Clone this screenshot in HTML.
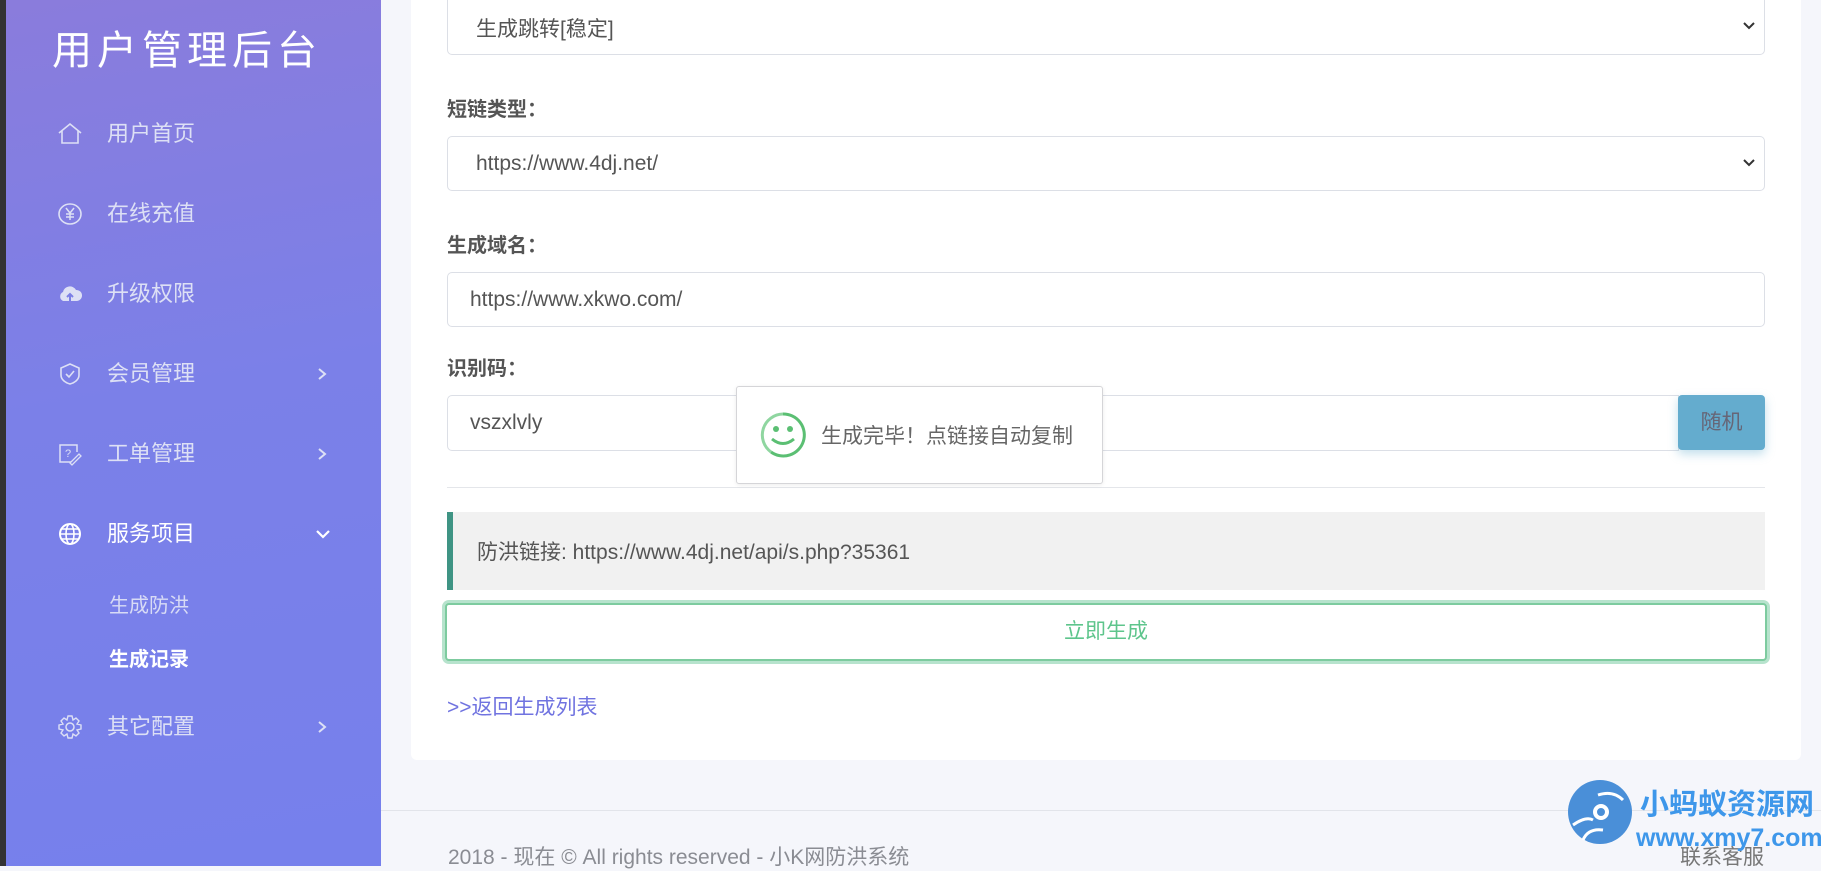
<!DOCTYPE html>
<html><head><meta charset="utf-8"><style>
*{box-sizing:border-box;margin:0;padding:0}
body{width:1821px;height:866px;overflow:hidden;background:#f5f6fb;font-family:"Liberation Sans","Noto Sans CJK SC",sans-serif;position:relative;color:#555}
.dark{position:absolute;left:0;top:0;width:6px;height:866px;background:#333}
.side{position:absolute;left:6px;top:0;width:375px;height:866px;background:linear-gradient(170deg,#8a7cdc 0%,#7b80e8 45%,#7680ec 100%)}
.title{position:absolute;left:46px;top:18px;color:#fff;font-size:40px;letter-spacing:5px}
.mi{position:absolute;left:107px;color:#dde0f5;font-size:22px;line-height:30px}
.ic{position:absolute;left:57px;width:26px;height:26px}
.chev{position:absolute;left:316px}
.sub{position:absolute;left:109px;font-size:20px;color:#d8dbf5}
.card{position:absolute;left:411px;top:-10px;width:1390px;height:770px;background:#fff;border-radius:6px}
.box{position:absolute;left:447px;width:1318px;border:1px solid #dcdfe6;border-radius:5px;background:#fff;font-size:21px;color:#555}
.lbl{position:absolute;left:447px;font-size:20px;color:#555;font-weight:bold}
.arrow{position:absolute;right:8px;top:50%;margin-top:-8px}
</style></head><body>
<div class="dark"></div>
<div class="side">
<div class="title">用户管理后台</div>
</div>
<svg class="ic" style="top:121px" viewBox="0 0 26 26"><path d="M2 12 L13 3 L24 12 M5 10 V22 H21 V10" fill="none" stroke="#dde0f5" stroke-width="1.6"/></svg>
<div class="mi" style="top:119px">用户首页</div>
<svg class="ic" style="top:201px" viewBox="0 0 26 26"><ellipse cx="13" cy="13" rx="11" ry="10" fill="none" stroke="#dde0f5" stroke-width="1.6"/><path d="M9 7 L13 12 L17 7 M13 12 V19 M9 13 H17 M9 16 H17" fill="none" stroke="#dde0f5" stroke-width="1.5"/></svg>
<div class="mi" style="top:199px">在线充值</div>
<svg class="ic" style="top:281px" viewBox="0 0 26 26"><path d="M6 20 A5 5 0 0 1 6 11 A7 7 0 0 1 19 9 A5.5 5.5 0 0 1 20 20 Z" fill="#dde0f5"/><path d="M13 20 V13 M10 16 L13 13 L16 16" stroke="#7c7fe6" stroke-width="2" fill="none"/></svg>
<div class="mi" style="top:279px">升级权限</div>
<svg class="ic" style="top:361px" viewBox="0 0 26 26"><path d="M13 3 L22 7 V14 C22 19 17 22 13 23 C9 22 4 19 4 14 V7 Z" fill="none" stroke="#dde0f5" stroke-width="1.6"/><path d="M9 13 L12 16 L17 10" fill="none" stroke="#dde0f5" stroke-width="1.6"/></svg>
<div class="mi" style="top:359px">会员管理</div>
<svg class="chev" style="top:367px" width="12" height="14" viewBox="0 0 12 14"><path d="M3 2 L9 7 L3 12" fill="none" stroke="#dde0f5" stroke-width="2"/></svg>
<svg class="ic" style="top:441px" viewBox="0 0 26 26"><path d="M14 21 H3 V4 H20 V11" fill="none" stroke="#dde0f5" stroke-width="1.5"/><text x="8" y="16" font-size="11" fill="#dde0f5" font-family="Liberation Sans">?</text><path d="M13 22 L22 13 L24 15 L15 24 Z" fill="none" stroke="#dde0f5" stroke-width="1.3"/></svg>
<div class="mi" style="top:439px">工单管理</div>
<svg class="chev" style="top:447px" width="12" height="14" viewBox="0 0 12 14"><path d="M3 2 L9 7 L3 12" fill="none" stroke="#dde0f5" stroke-width="2"/></svg>
<svg class="ic" style="top:521px" viewBox="0 0 26 26"><circle cx="13" cy="13" r="10" fill="none" stroke="#fff" stroke-width="2"/><ellipse cx="13" cy="13" rx="4" ry="10" fill="none" stroke="#fff" stroke-width="1.6"/><path d="M3 13 H23 M5 8 H21 M5 18 H21" stroke="#fff" stroke-width="1.6"/></svg>
<div class="mi" style="top:519px;color:#fff">服务项目</div>
<svg style="position:absolute;left:315px;top:528px" width="16" height="12" viewBox="0 0 16 12"><path d="M2 3 L8 9 L14 3" fill="none" stroke="#fff" stroke-width="2.2"/></svg>
<div class="sub" style="top:589px">生成防洪</div>
<div class="sub" style="top:643px;color:#fff;font-weight:bold">生成记录</div>
<svg class="ic" style="top:714px" viewBox="0 0 26 26"><circle cx="13" cy="13" r="4" fill="none" stroke="#dde0f5" stroke-width="1.5"/><path d="M11 2 H15 L16 6 L19 4 L22 7 L20 10 L24 11 V15 L20 16 L22 19 L19 22 L16 20 L15 24 H11 L10 20 L7 22 L4 19 L6 16 L2 15 V11 L6 10 L4 7 L7 4 L10 6 Z" fill="none" stroke="#dde0f5" stroke-width="1.4"/></svg>
<div class="mi" style="top:712px">其它配置</div>
<svg class="chev" style="top:720px" width="12" height="14" viewBox="0 0 12 14"><path d="M3 2 L9 7 L3 12" fill="none" stroke="#dde0f5" stroke-width="2"/></svg>

<div class="card"></div>
<div class="box" style="top:0;height:55px;border-top:none;border-radius:0 0 5px 5px"><span style="position:absolute;left:28px;top:13px">生成跳转[稳定]</span><svg class="arrow" width="14" height="14" viewBox="0 0 14 14"><path d="M2 4 L7 9 L12 4" fill="none" stroke="#333" stroke-width="2"/></svg></div>
<div class="lbl" style="top:93px">短链类型：</div>
<div class="box" style="top:136px;height:55px"><span style="position:absolute;left:28px;top:15px">https://www.4dj.net/</span><svg class="arrow" width="14" height="14" viewBox="0 0 14 14"><path d="M2 4 L7 9 L12 4" fill="none" stroke="#333" stroke-width="2"/></svg></div>
<div class="lbl" style="top:229px">生成域名：</div>
<div class="box" style="top:272px;height:55px"><span style="position:absolute;left:22px;top:15px">https://www.xkwo.com/</span></div>
<div class="lbl" style="top:352px">识别码：</div>
<div class="box" style="top:395px;height:56px;width:1232px;border-radius:5px 0 0 5px"><span style="position:absolute;left:22px;top:15px">vszxlvly</span></div>
<div style="position:absolute;left:1678px;top:395px;width:87px;height:55px;background:#64acce;border-radius:4px;box-shadow:0 4px 10px rgba(100,172,206,.4);color:#667;font-size:21px;text-align:center;line-height:55px">随机</div>
<div style="position:absolute;left:447px;top:487px;width:1318px;height:1px;background:#e4e6ea"></div>
<div style="position:absolute;left:447px;top:512px;width:1318px;height:78px;background:#f1f1f1;border-left:6px solid #3f9484;font-size:21px;color:#555;padding:24px 0 0 24px">防洪链接: https://www.4dj.net/api/s.php?35361</div>
<div style="position:absolute;left:445px;top:603px;width:1322px;height:58px;border:2px solid #7dcb9f;box-shadow:0 0 0 3px #b7e3cd;border-radius:4px;background:#fff;color:#5ec58c;font-size:21px;text-align:center;line-height:54px">立即生成</div>
<div style="position:absolute;left:447px;top:691px;color:#7073e0;font-size:21px">&gt;&gt;返回生成列表</div>
<div style="position:absolute;left:381px;top:810px;width:1440px;height:1px;background:#e2e4ea"></div>
<div style="position:absolute;left:448px;top:841px;color:#8a8c93;font-size:21px;white-space:nowrap">2018 - 现在 © All rights reserved - 小K网防洪系统</div>
<div style="position:absolute;left:1680px;top:841px;color:#777;font-size:21px">联系客服</div>
<svg style="position:absolute;left:1568px;top:780px" width="65" height="65" viewBox="0 0 65 65"><circle cx="32" cy="32" r="32" fill="#4a8fd8"/><circle cx="33" cy="32" r="6" fill="none" stroke="#fff" stroke-width="4"/><path d="M30 15 Q45 10 55 20 M5 45 Q18 36 25 40 M15 60 Q20 48 35 50" fill="none" stroke="#fff" stroke-width="3"/></svg>
<div style="position:absolute;left:1640px;top:782px;color:#3e97ea;font-size:29px;font-weight:bold;white-space:nowrap;font-family:'Noto Sans CJK SC',sans-serif;line-height:40px">小蚂蚁资源网</div>
<div style="position:absolute;left:1636px;top:824px;color:#3e97ea;font-size:25px;font-weight:bold;white-space:nowrap;font-family:'Liberation Sans',sans-serif">www.xmy7.com</div>
<div style="position:absolute;left:736px;top:386px;width:367px;height:98px;background:#fff;border:1px solid #d5d5d8;border-radius:3px;box-shadow:0 1px 4px rgba(0,0,0,.08)">
<svg style="position:absolute;left:22px;top:24px" width="48" height="48" viewBox="0 0 48 48"><path d="M24 3 A21 21 0 1 1 12 41" fill="none" stroke="#5bbf73" stroke-width="3"/><path d="M12 41 A21 21 0 0 1 24 3" fill="none" stroke="#8fd6a0" stroke-width="3"/><circle cx="17" cy="18" r="3" fill="#5bbf73"/><circle cx="31" cy="18" r="3" fill="#5bbf73"/><path d="M13 28 Q24 37 35 28" fill="none" stroke="#5bbf73" stroke-width="3"/></svg>
<div style="position:absolute;left:84px;top:33px;font-size:21px;color:#666">生成完毕！点链接自动复制</div>
</div>
</body></html>
